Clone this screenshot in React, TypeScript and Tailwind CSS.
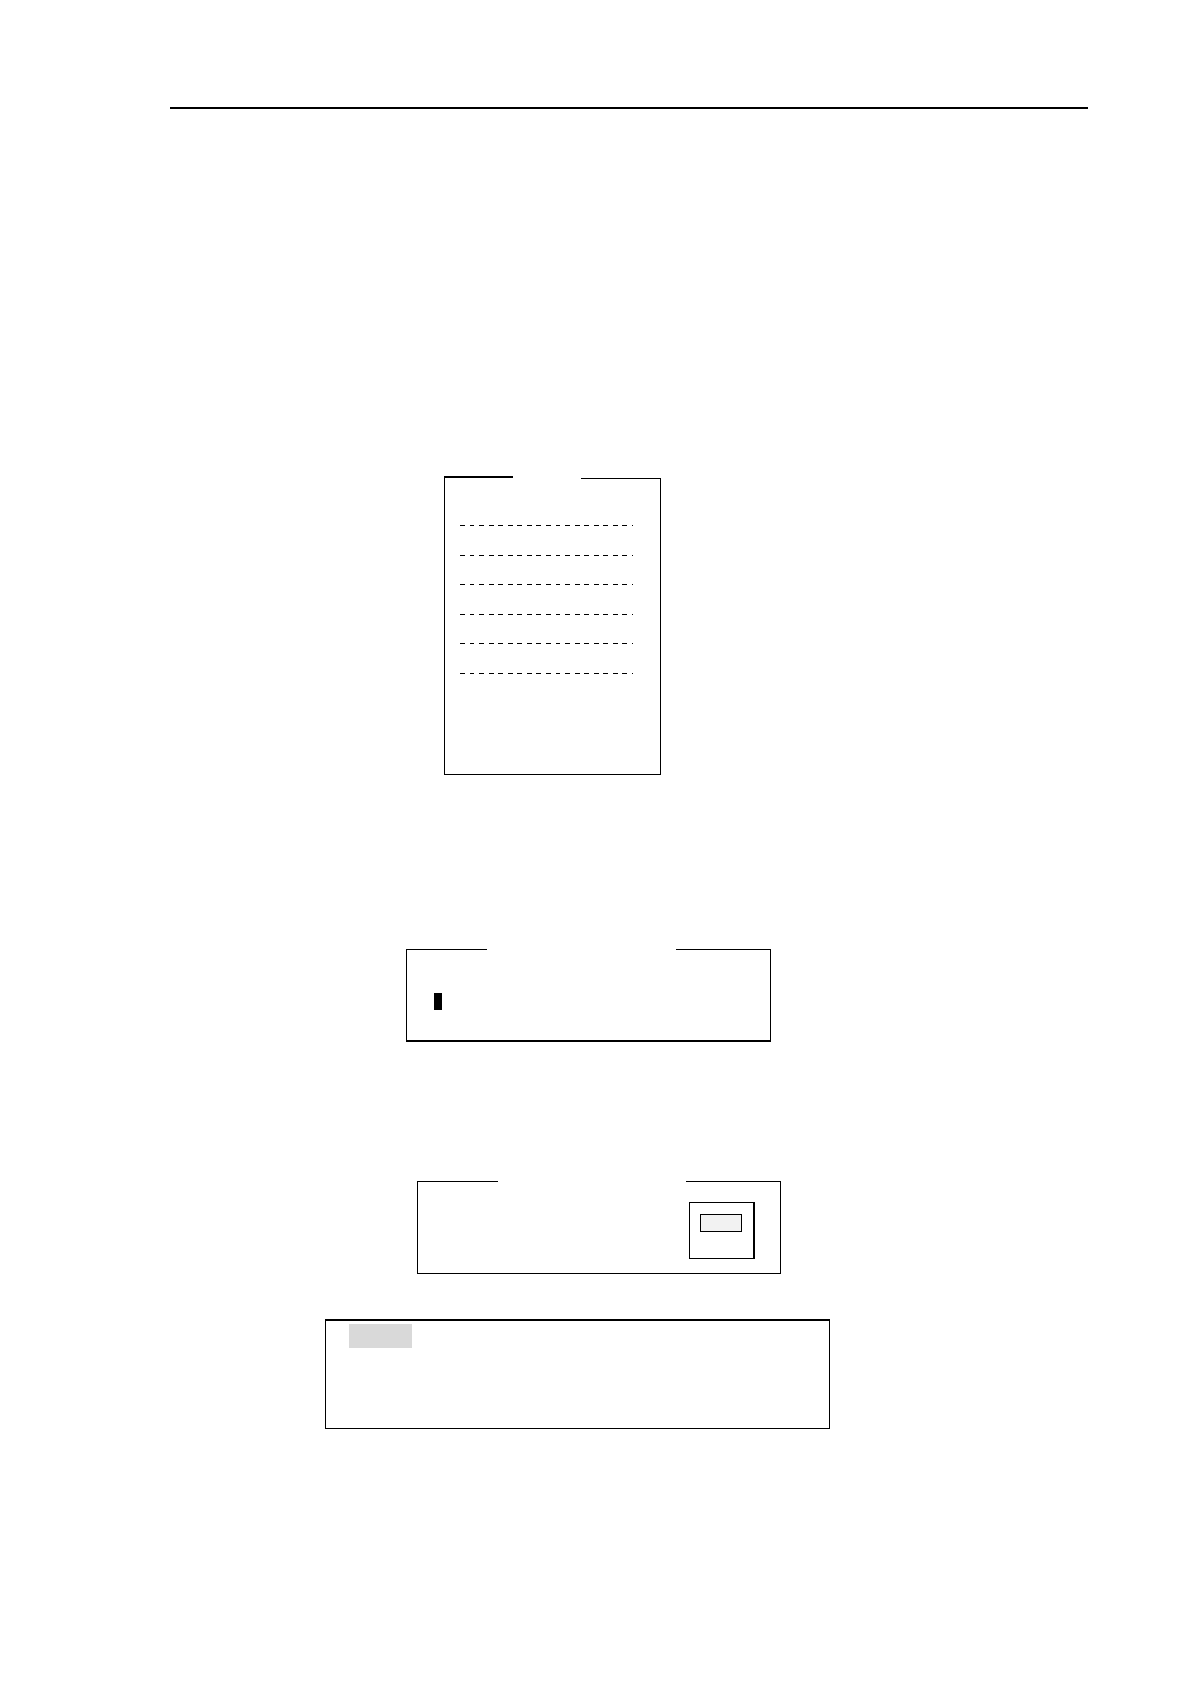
import type { ReactNode } from 'react';

const menuLines = [1, 2, 3, 4, 5, 6];

// Top edge of a panel, left open in the middle for a caption
function OpenTop({ left, right }: { left: string; right: string }) {
  return (
    <div className="flex items-end justify-between">
      <div className={left} />
      <div className={right} />
    </div>
  );
}

function DashedLine() {
  return (
    <svg className="block h-px w-[173px]" shapeRendering="crispEdges" aria-hidden="true">
      <line x1="0" y1="0.5" x2="173" y2="0.5" stroke="black" strokeWidth="1" strokeDasharray="4.9 4.65" />
    </svg>
  );
}

function EntryPanel({ className, children }: { className: string; children: ReactNode }) {
  return (
    <section className={className}>
      <OpenTop left="h-px w-[81px] bg-black" right="h-px w-[95px] bg-black" />
      {children}
    </section>
  );
}

export default function App() {
  return (
    <div className="min-h-screen bg-white pt-[107px] pr-[102px] pb-[255px] pl-[170px] font-['Liberation_Sans',sans-serif]">
      {/* Header rule */}
      <hr className="h-[2px] border-0 bg-black" />

      <main>
        {/* Menu panel */}
        <section className="mt-[367px] ml-[274px] w-full max-w-[217px]">
          <OpenTop
            left="h-[3px] w-[69px] border-t-2 border-l border-black"
            right="h-px w-[80px] bg-black"
          />
          <div className="h-[296px] border-x border-b border-black pt-[46px] pl-[15px]">
            <div className="flex h-[149px] flex-col justify-between">
              {menuLines.map((line) => (
                <DashedLine key={line} />
              ))}
            </div>
          </div>
        </section>

        {/* Entry panel with the cursor */}
        <EntryPanel className="mt-[174px] ml-[236px] w-full max-w-[365px]">
          <div className="h-[92px] border-x border-b-2 border-black pt-[43px] pl-[27px]">
            <div className="h-[17px] w-2 bg-black" />
          </div>
        </EntryPanel>

        {/* Entry panel with the key box */}
        <EntryPanel className="mt-[139px] ml-[247px] w-full max-w-[364px]">
          <div className="flex h-[92px] justify-end border-x border-b border-black pt-5 pr-[25px]">
            <div className="h-[57px] w-[66px] border border-r-2 border-black pt-[11px] pl-[10px]">
              <div className="h-[18px] w-[42px] border border-black bg-[#f2f2f2]" />
            </div>
          </div>
        </EntryPanel>

        {/* Note */}
        <section className="mt-[45px] ml-[155px] h-[110px] w-full max-w-[505px] border border-t-2 border-black pt-[3px] pl-[23px]">
          <div className="h-6 w-[63px] bg-[#d9d9d9]" />
        </section>
      </main>
    </div>
  );
}
